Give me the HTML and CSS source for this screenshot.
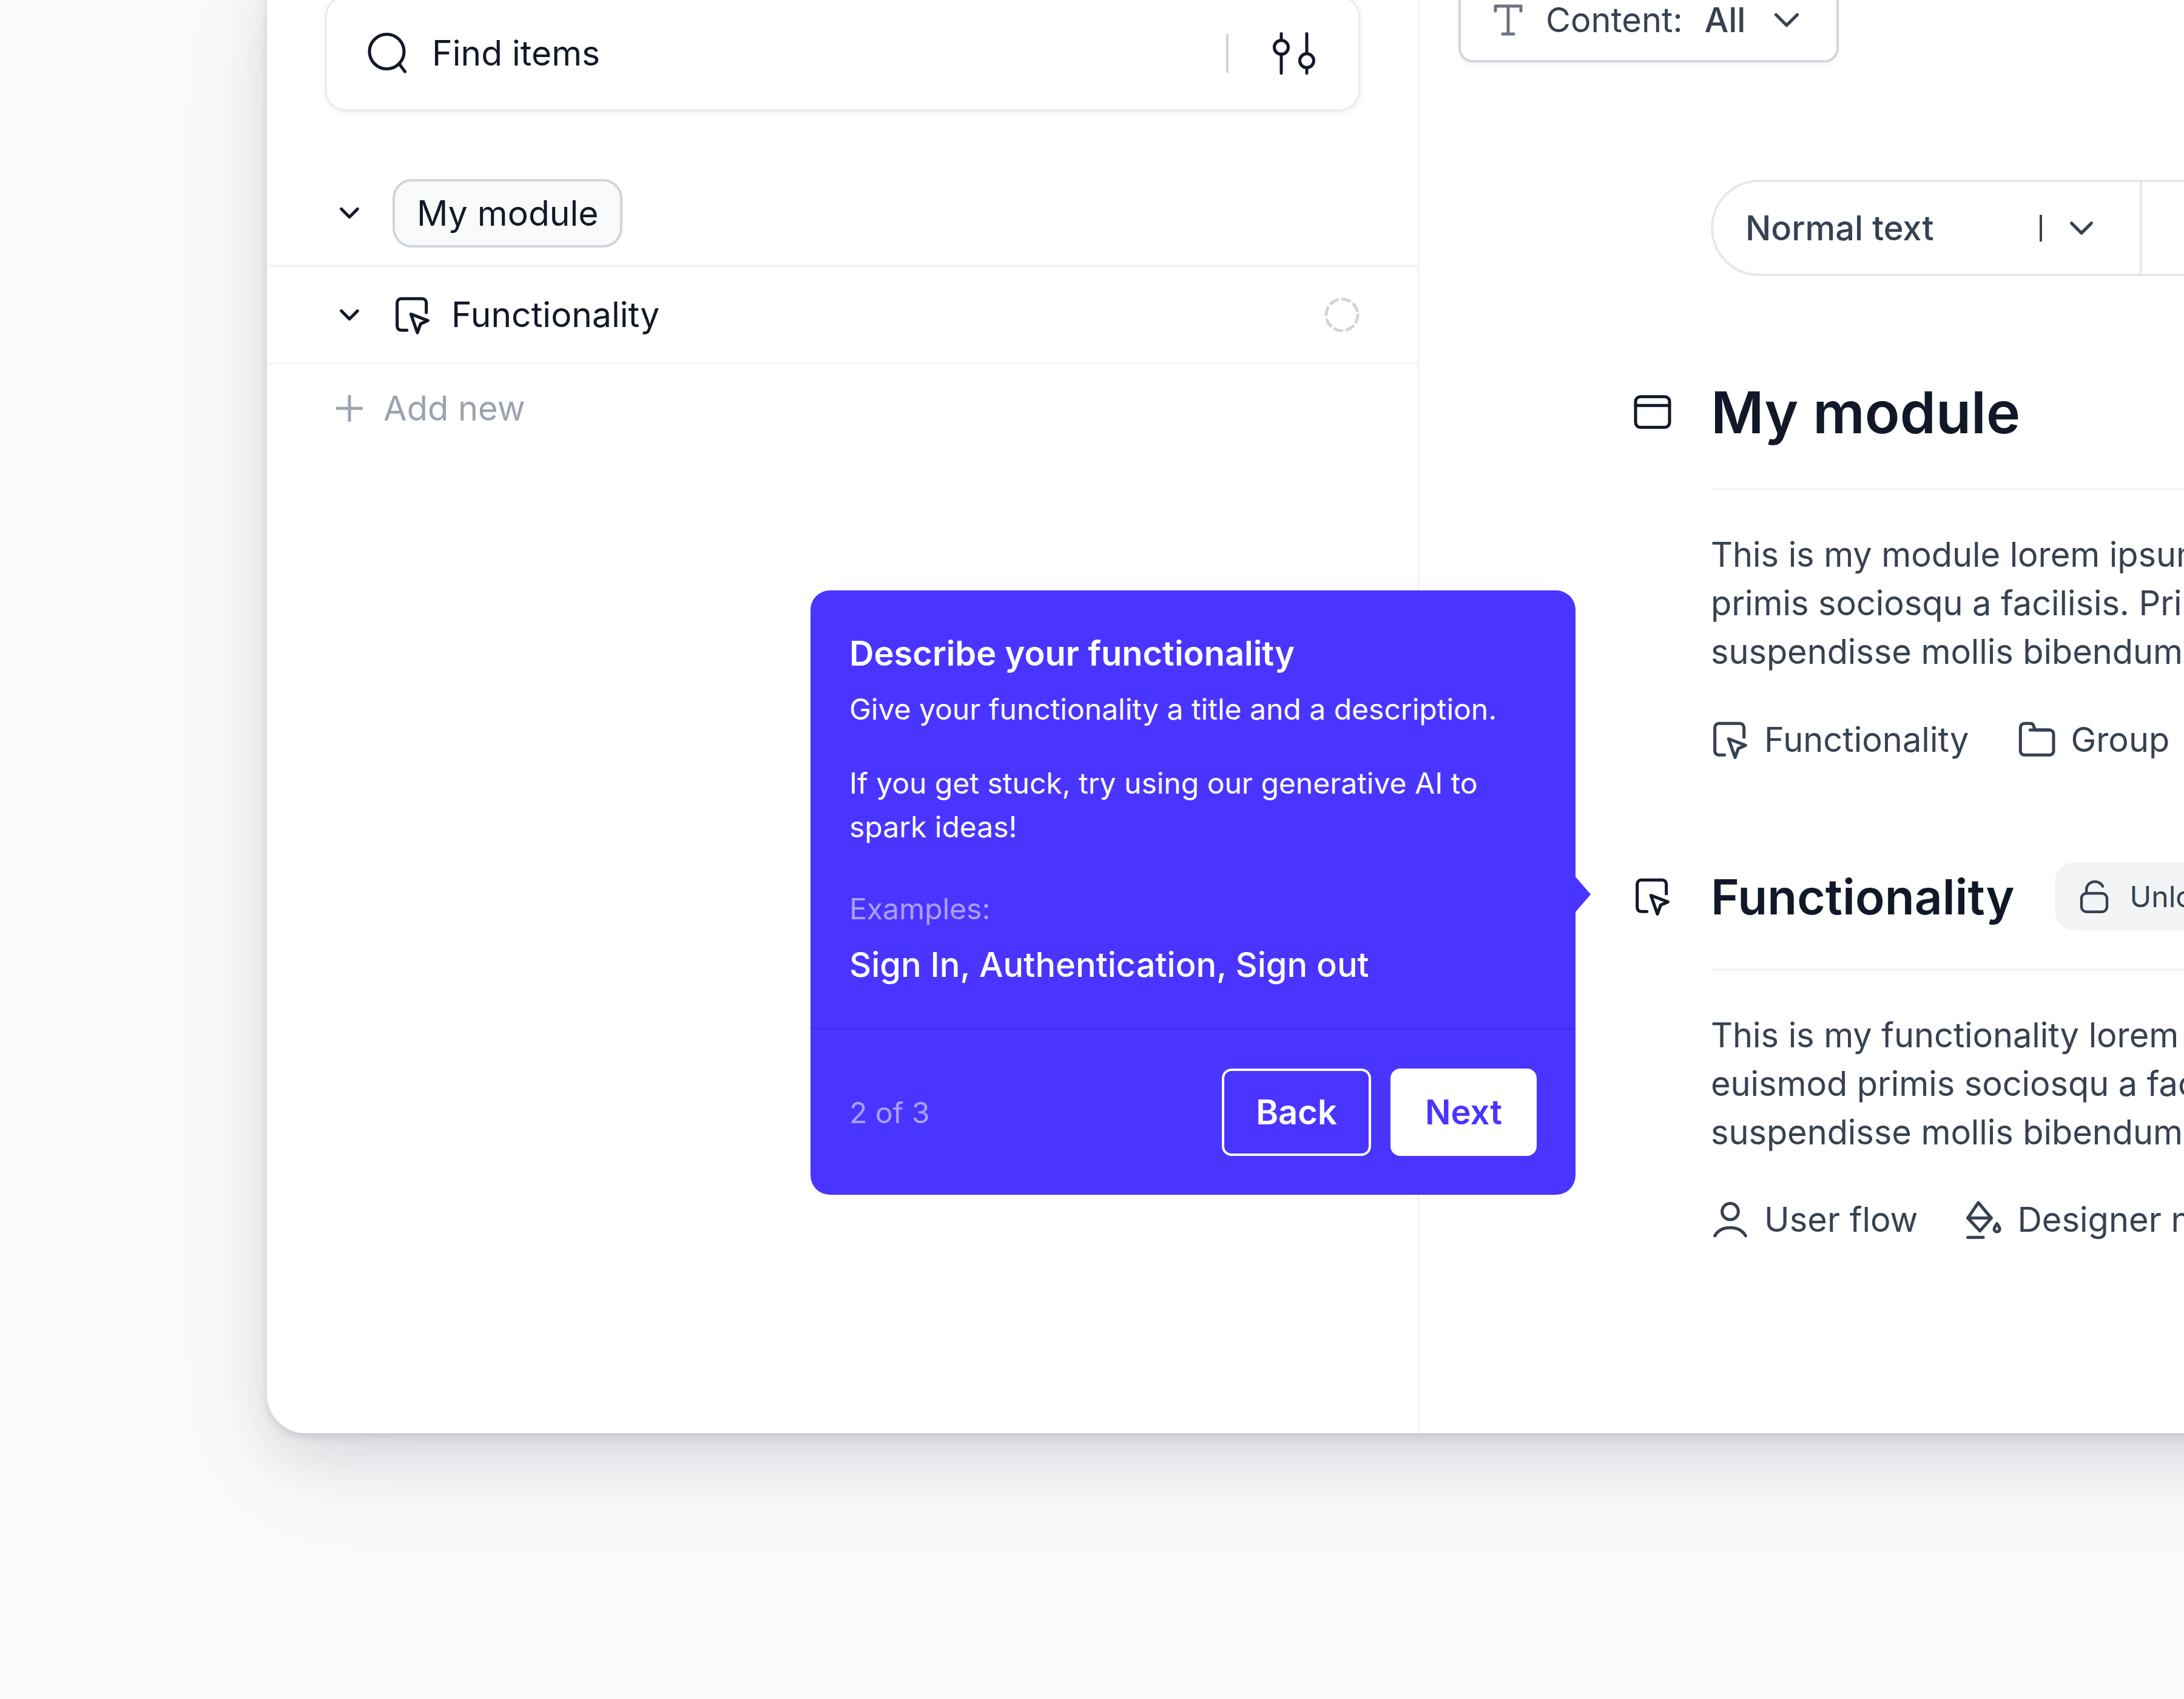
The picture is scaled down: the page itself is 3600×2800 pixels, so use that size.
FILE: index.html
```html
<!DOCTYPE html>
<html lang="en">
<head>
  <meta charset="UTF-8" />
  <title>My module</title>
  <link rel="stylesheet" href="styles.css">
</head>
<body>
  <svg class="sprite" aria-hidden="true">
    <symbol id="i-chevron" viewBox="0 0 24 24"><path d="M5 8.500l7 7 7-7"/></symbol>
    <symbol id="i-cursor" viewBox="0 0 24 24"><path d="M8.500 21.500H5a2.500 2.500 0 0 1-2.500-2.500V4.500A2.500 2.500 0 0 1 5 2h13a2.500 2.500 0 0 1 2.500 2.500v6"/><path d="M11 11.500l10.500 4-4.500 2-2 5.500z"/></symbol>
    <symbol id="i-window" viewBox="0 0 24 24"><rect x="1.500" y="2.500" width="21" height="19" rx="3"/><path d="M1.500 8h21"/></symbol>
    <symbol id="i-folder" viewBox="0 0 24 24"><path d="M2 19V4.500A2.500 2.500 0 0 1 4.500 2h3.700a2 2 0 0 1 1.900 1.300L11 6h9a2.500 2.500 0 0 1 2.500 2.500V19a2.500 2.500 0 0 1-2.500 2.500H4.500A2.500 2.500 0 0 1 2 19z"/><path d="M8 6h12"/></symbol>
    <symbol id="i-user" viewBox="0 0 24 24"><circle cx="12" cy="7" r="5"/><path d="M2.500 22c2-3.500 5.500-5 9.500-5s7.500 1.500 9.500 5"/></symbol>
    <symbol id="i-paint" viewBox="0 0 24 24"><path d="M9 1.500l8 9.500-7 8-7.500-8z"/><path d="M2.500 11H17"/><path d="M2.500 23H12"/><path d="M20.500 14.500c1 1.500 1.700 2.400 1.700 3.300a1.700 1.700 0 0 1-3.400 0c0-.9.700-1.800 1.700-3.300z"/></symbol>
    <symbol id="i-lock" viewBox="0 0 24 24"><rect x="3" y="10" width="18" height="13" rx="3.500"/><path d="M6.500 10V7a6 5.500 0 0 1 11.500-2"/></symbol>
  </svg>

  <div class="window">
    <aside class="sidebar">
      <div class="search">
        <svg class="search-icon" viewBox="0 0 24 24"><circle cx="11.500" cy="11" r="9.500"/><path d="M18.500 18l3 4"/></svg>
        <span class="search-label">Find items</span>
        <span class="search-sep"></span>
        <svg class="filter-icon" viewBox="0 0 70 70"><path d="M14 2.500v11M14 36v31.500M56 2.500v33M56 58v9.500"/><circle cx="14" cy="25" r="11.500"/><circle cx="56" cy="47" r="11.500"/></svg>
      </div>

      <div class="tree-row tree-module">
        <svg class="icon chevron"><use href="#i-chevron"/></svg>
        <span class="chip">My module</span>
      </div>
      <div class="tree-row tree-func">
        <svg class="icon chevron"><use href="#i-chevron"/></svg>
        <svg class="icon tree-icon"><use href="#i-cursor"/></svg>
        <span class="tree-label">Functionality</span>
        <svg class="status-ring" viewBox="0 0 60 60"><circle cx="30" cy="30" r="26"/></svg>
      </div>
      <div class="add-row">
        <svg class="add-icon" viewBox="0 0 44 44"><path d="M22 2v40M2 22h40"/></svg>
        <span>Add new</span>
      </div>
    </aside>

    <main class="doc">
      <div class="content-filter">
        <svg class="t-icon" viewBox="0 0 48 52"><path d="M3 11V3h42v8M24 3v46M15 49h18"/></svg>
        <span class="content-label">Content:</span>
        <span class="content-value">All</span>
        <svg class="icon chevron-lg"><use href="#i-chevron"/></svg>
      </div>

      <div class="toolbar">
        <div class="toolbar-style">
          <span class="toolbar-text">Normal text</span>
          <span class="caret"></span>
          <svg class="icon chevron-sm"><use href="#i-chevron"/></svg>
        </div>
        <div class="toolbar-rest"></div>
      </div>

      <section class="block block-module">
        <div class="block-head">
          <svg class="icon head-icon"><use href="#i-window"/></svg>
          <h1>My module</h1>
        </div>
        <p>This is my module lorem ipsum dolor sit amet<br>primis sociosqu a facilisis. Primis nulla<br>suspendisse mollis bibendum</p>
        <div class="tags">
          <span class="tag"><svg class="icon"><use href="#i-cursor"/></svg>Functionality</span>
          <span class="tag"><svg class="icon"><use href="#i-folder"/></svg>Group</span>
        </div>
      </section>

      <section class="block block-func">
        <div class="block-head">
          <svg class="icon head-icon"><use href="#i-cursor"/></svg>
          <h2>Functionality</h2>
          <span class="lock-pill"><svg class="icon"><use href="#i-lock"/></svg>Unlocked</span>
        </div>
        <p>This is my functionality lorem ipsum dolor<br>euismod primis sociosqu a facilisis<br>suspendisse mollis bibendum</p>
        <div class="tags tags-func">
          <span class="tag"><svg class="icon"><use href="#i-user"/></svg>User flow</span>
          <span class="tag"><svg class="icon"><use href="#i-paint"/></svg>Designer notes</span>
        </div>
      </section>
    </main>

    <div class="tour">
      <div class="tour-body">
        <h3>Describe your functionality</h3>
        <p class="tour-lead">Give your functionality a title and a description.</p>
        <p class="tour-text">If you get stuck, try using our generative AI to spark ideas!</p>
        <p class="tour-muted">Examples:</p>
        <p class="tour-examples">Sign In, Authentication, Sign out</p>
      </div>
      <div class="tour-foot">
        <span class="tour-step">2 of 3</span>
        <button class="btn btn-back">Back</button>
        <button class="btn btn-next">Next</button>
      </div>
    </div>
  </div>
</body>
</html>
```

FILE: styles.css
```css
html, body {
  margin: 0;
  height: 2800px;
  overflow: hidden;
}

body {
  background: #f9fafb;
  font-family: Inter, sans-serif;
  color: #111827;
}

.sprite {
  display: none;
}

svg {
  fill: none;
  stroke: currentColor;
  stroke-linecap: round;
  stroke-linejoin: round;
  flex: none;
}

.icon {
  width: 64px;
  height: 64px;
  stroke-width: 1.9;
}

/* window */
.window {
  position: relative;
  display: flex;
  width: 3400px;
  height: 2422px;
  margin: -60px 0 0 440px;
  background: #fff;
  border-radius: 0 0 64px 64px;
  box-shadow: 0 6px 14px rgba(17, 24, 39, 0.12), 0 40px 90px rgba(17, 24, 39, 0.1), 0 60px 190px rgba(17, 24, 39, 0.05);
}

.sidebar {
  width: 1896px;
  flex: none;
  border-right: 4px solid #f3f4f6;
}

.search {
  display: flex;
  align-items: center;
  height: 192px;
  margin: 52px 93px 0 95px;
  padding: 0 71px 0 64px;
  box-sizing: border-box;
  border-radius: 36px;
  border: 4px solid #eceef1;
  box-shadow: 0 4px 10px rgba(17, 24, 39, 0.05);
  font-size: 57px;
  line-height: 72px;
}

.search-icon {
  width: 72px;
  height: 72px;
  stroke-width: 1.700;
  margin-right: 37px;
}

.search-label {
  flex: 1;
}

.search-sep {
  width: 4px;
  height: 64px;
  margin-right: 73px;
  background: #d1d5db;
}

.filter-icon {
  width: 70px;
  height: 70px;
  stroke-width: 5;
}

.tree-row {
  display: flex;
  align-items: center;
  border-bottom: 4px solid #f3f4f6;
  padding-left: 113px;
  font-size: 57px;
}

.tree-module {
  height: 170px;
  margin-top: 82px;
}

.tree-func {
  height: 157px;
  padding-right: 94px;
}

.chevron {
  width: 46px;
  height: 46px;
  margin-right: 48px;
  stroke-width: 2.600;
}

.chip {
  display: flex;
  align-items: center;
  height: 113px;
  padding: 0 35px 0 36px;
  box-sizing: border-box;
  background: #f9fafb;
  border: 4px solid #d1d5db;
  border-radius: 32px;
}

.tree-icon {
  margin: 0 32px 0 1px;
}

.tree-label {
  flex: 1;
}

.status-ring {
  width: 60px;
  height: 60px;
  stroke: #d1d5db;
  stroke-width: 5;
  stroke-dasharray: 12 8.420;
}

.add-row {
  display: flex;
  align-items: center;
  height: 144px;
  padding-left: 114px;
  font-size: 56px;
  color: #9ca3af;
}

.add-icon {
  width: 44px;
  height: 44px;
  stroke-width: 5;
  margin-right: 34px;
}

/* document side */
.doc {
  flex: 1;
  min-width: 0;
  padding-left: 64px;
  white-space: nowrap;
  color: #374151;
  font-size: 56px;
}

.content-filter {
  display: flex;
  align-items: center;
  width: 627px;
  height: 200px;
  margin-top: -37px;
  padding: 60px 0 0 54px;
  box-sizing: border-box;
  border: 4px solid #d1d5db;
  border-radius: 24px;
  box-shadow: 0 4px 8px rgba(17, 24, 39, 0.05);
}

.t-icon {
  width: 48px;
  height: 52px;
  stroke: #6b7280;
  stroke-width: 5;
  margin-right: 38px;
}

.content-label {
  margin-right: 36px;
}

.content-value {
  margin-right: 38px;
  font-weight: 500;
}

.chevron-lg {
  width: 60px;
  height: 60px;
  stroke-width: 2.100;
}

.toolbar {
  display: flex;
  width: 900px;
  height: 159px;
  margin: 193px 0 0 416px;
  box-sizing: border-box;
  border: 4px solid #e5e7eb;
  border-right: 0;
  border-radius: 80px 0 0 80px;
}

.toolbar-style {
  display: flex;
  align-items: center;
  width: 707px;
  flex: none;
  padding-left: 53px;
  box-sizing: border-box;
  border-right: 4px solid #e5e7eb;
}

.toolbar-text {
  flex: 1;
  font-weight: 500;
}

.caret {
  width: 4px;
  height: 44px;
  margin-right: 37px;
  background: #374151;
}

.chevron-sm {
  width: 56px;
  height: 56px;
  margin-right: 68px;
  stroke-width: 2.200;
}

.block {
  margin-left: 416px;
}

.block-module {
  margin-top: 99px;
}

.block-func {
  margin-top: 105px;
}

.block-head {
  position: relative;
  display: flex;
  align-items: center;
  border-bottom: 4px solid #f3f4f6;
}

.block-module .block-head {
  height: 250px;
}

.block-func .block-head {
  height: 238px;
}

.head-icon {
  position: absolute;
  left: -128px;
  color: #111827;
}

.block-head h1,
.block-head h2 {
  margin: 0;
  color: #111827;
  font-weight: 600;
}

h1 {
  font-size: 95px;
}

.block-head h2 {
  font-size: 80px;
  margin-right: 66px;
}

.lock-pill {
  display: inline-flex;
  align-items: center;
  gap: 31px;
  height: 112px;
  padding: 0 37px;
  background: #f3f4f6;
  border-radius: 32px;
  font-size: 48px;
}

.lock-pill .icon {
  width: 56px;
  height: 56px;
}

.doc p {
  margin: 66px 0 0;
  line-height: 80px;
  letter-spacing: -0.1px;
}

.tags {
  display: flex;
  gap: 80px;
  margin-top: 71px;
}

.tags-func {
  gap: 76px;
  margin-top: 70px;
}

.tag {
  display: inline-flex;
  align-items: center;
  gap: 24px;
}

/* tour popover */
.tour {
  position: absolute;
  left: 896px;
  top: 1033px;
  width: 1261px;
  height: 996px;
  display: flex;
  flex-direction: column;
  box-sizing: border-box;
  background: #4a34ff;
  border-radius: 32px;
  color: #fff;
  font-size: 48px;
}

.tour::after {
  content: "";
  position: absolute;
  right: -25px;
  top: 472px;
  width: 50px;
  height: 58px;
  background: #4a34ff;
  clip-path: polygon(50% 0, 100% 50%, 50% 100%, 0 50%);
}

.tour-body {
  flex: 1;
  padding: 66px 64px 0;
}

.tour h3 {
  margin: 0;
  font-size: 56px;
  line-height: 76px;
  font-weight: 600;
}

.tour p {
  margin: 0;
  line-height: 72px;
}

.tour .tour-lead {
  margin-top: 18px;
}

.tour .tour-text {
  margin-top: 50px;
}

.tour .tour-muted {
  margin-top: 63px;
  color: rgba(255, 255, 255, 0.55);
}

.tour .tour-examples {
  margin-top: 18px;
  font-size: 56px;
  line-height: 76px;
  font-weight: 500;
}

.tour-foot {
  display: flex;
  align-items: center;
  height: 275px;
  padding: 0 64px;
  box-sizing: border-box;
  border-top: 3px solid #432ee8;
}

.tour-step {
  flex: 1;
  color: rgba(255, 255, 255, 0.55);
}

.btn {
  height: 144px;
  padding: 0;
  border-radius: 16px;
  font-family: inherit;
  font-size: 56px;
  font-weight: 600;
  cursor: pointer;
}

.btn-back {
  width: 246px;
  margin-right: 32px;
  background: transparent;
  border: 4px solid #fff;
  color: #fff;
}

.btn-next {
  width: 241px;
  background: #fff;
  border: 0;
  color: #4a34ff;
}
```
